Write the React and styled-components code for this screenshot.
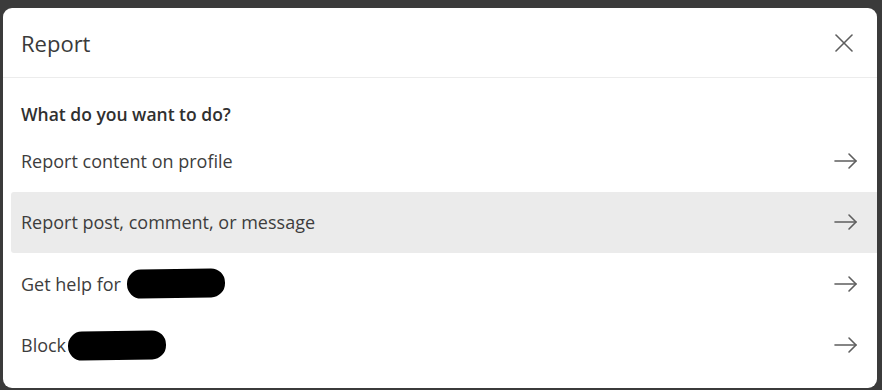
import React from "react";
import styled, { createGlobalStyle } from "styled-components";

const GlobalStyle = createGlobalStyle`
  html, body {
    margin: 0;
    padding: 0;
    background: #3b3b3b;
  }
  body {
    font-family: "Open Sans", "Noto Sans", "Liberation Sans", sans-serif;
  }
`;

const Backdrop = styled.div`
  width: 882px;
  height: 390px;
  box-sizing: border-box;
  padding: 8px 5px 2px 3px;
  background: #3b3b3b;
`;

const Dialog = styled.div`
  height: 100%;
  background: #ffffff;
  border-radius: 9px;
  display: flex;
  flex-direction: column;
  overflow: hidden;
`;

const Header = styled.div`
  height: 70px;
  flex: none;
  box-sizing: border-box;
  display: flex;
  align-items: center;
  justify-content: space-between;
  padding: 0 22px 0 18px;
  border-bottom: 1px solid #ececec;
`;

const Title = styled.h2`
  margin: 0;
  font-size: 22px;
  font-weight: 400;
  color: #3a3a3a;
`;

const CloseButton = styled.button`
  border: none;
  background: none;
  padding: 0;
  width: 22px;
  height: 22px;
  display: flex;
  align-items: center;
  justify-content: center;
  cursor: pointer;
`;

const Body = styled.div`
  display: flex;
  flex-direction: column;
  padding: 25px 0 0 8px;
`;

const Question = styled.h3`
  margin: 0 0 5px 10px;
  font-size: 17.5px;
  line-height: 22px;
  font-weight: 600;
  color: #303030;
`;

const Option = styled.div`
  height: 61.5px;
  display: flex;
  align-items: center;
  justify-content: space-between;
  padding: 0 19px 0 10px;
  border-radius: 3px 0 0 3px;
  background: ${(p) => (p.$active ? "#ebebeb" : "transparent")};
  font-size: 18px;
  color: #3d3d3d;
  cursor: pointer;
`;

const Label = styled.span`
  display: flex;
  align-items: center;
`;

const Redacted = styled.span`
  display: inline-block;
  width: ${(p) => p.$w}px;
  height: 29px;
  margin-left: ${(p) => p.$gap}px;
  background: #000;
  border-radius: 14px;
  transform: rotate(-1deg);
`;

const ArrowIcon = () => (
  <svg width="24" height="20" viewBox="0 0 24 20" fill="none" stroke="#5e5e5e" strokeWidth="1.6" strokeLinecap="round" strokeLinejoin="round">
    <path d="M1 10 H22" />
    <path d="M15 3 L22 10 L15 17" />
  </svg>
);

const CloseIcon = () => (
  <svg width="18" height="18" viewBox="0 0 18 18" fill="none" stroke="#5e5e5e" strokeWidth="1.6" strokeLinecap="round">
    <path d="M1 1 L17 17" />
    <path d="M17 1 L1 17" />
  </svg>
);

const options = [
  { label: "Report content on profile" },
  { label: "Report post, comment, or message", active: true },
  { label: "Get help for", redact: 98, gap: 6 },
  { label: "Block", redact: 98, gap: 2 },
];

const App = () => {
  return (
    <>
      <GlobalStyle />
      <Backdrop>
        <Dialog>
          <Header>
            <Title>Report</Title>
            <CloseButton aria-label="Close">
              <CloseIcon />
            </CloseButton>
          </Header>
          <Body>
            <Question>What do you want to do?</Question>
            {options.map((o) => (
              <Option key={o.label} $active={o.active}>
                <Label>
                  {o.label}
                  {o.redact && <Redacted $w={o.redact} $gap={o.gap} />}
                </Label>
                <ArrowIcon />
              </Option>
            ))}
          </Body>
        </Dialog>
      </Backdrop>
    </>
  );
};

export default App;
